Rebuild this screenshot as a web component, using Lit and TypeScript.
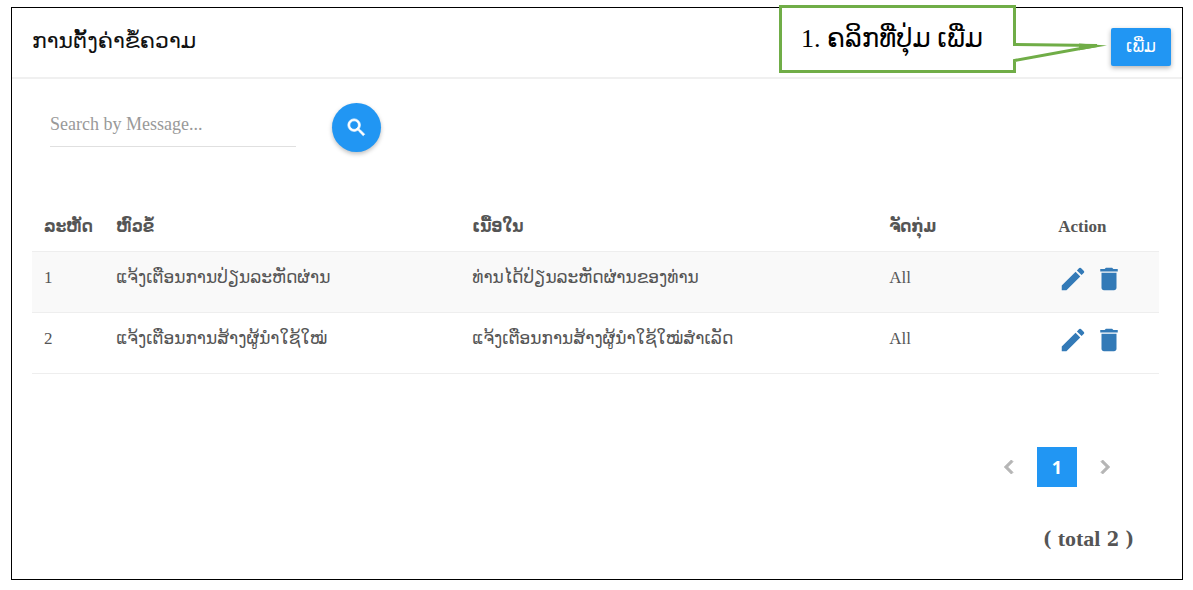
import { LitElement, html, css, svg } from "lit";
import { customElement, state } from "lit/decorators.js";

interface Message {
  id: number;
  title: string;
  body: string;
  group: string;
}

const icon = (path: string, variant = "") => html`
  <svg class="icon ${variant}" viewBox="0 0 24 24" aria-hidden="true">${svg`<path d=${path}></path>`}</svg>
`;

const SEARCH =
  "M15.5 14h-.79l-.28-.27A6.47 6.47 0 0 0 16 9.5 6.5 6.5 0 1 0 9.5 16c1.61 0 3.09-.59 4.23-1.57l.27.28v.79l5 4.99L20.49 19l-4.99-5zm-6 0C7.01 14 5 11.99 5 9.5S7.01 5 9.5 5 14 7.01 14 9.5 11.99 14 9.5 14z";
const EDIT =
  "M3 17.25V21h3.75L17.81 9.94l-3.75-3.75L3 17.25zM20.71 7.04a1 1 0 0 0 0-1.41l-2.34-2.34a1 1 0 0 0-1.41 0l-1.83 1.83 3.75 3.75 1.83-1.83z";
const TRASH = "M6 19c0 1.1.9 2 2 2h8c1.1 0 2-.9 2-2V7H6v12zM19 4h-3.500l-1-1h-5l-1 1H5v2h14V4z";
const LEFT = "M15.41 7.41 14 6l-6 6 6 6 1.41-1.41L10.83 12z";
const RIGHT = "M10 6 8.59 7.41 13.17 12l-4.58 4.59L10 18l6-6z";

@customElement("app-root")
export class AppRoot extends LitElement {
  @state() private messages: Message[] = [
    { id: 1, title: "ແຈ້ງເຕືອນການປ່ຽນລະຫັດຜ່ານ", body: "ທ່ານໄດ້ປ່ຽນລະຫັດຜ່ານຂອງທ່ານ", group: "All" },
    { id: 2, title: "ແຈ້ງເຕືອນການສ້າງຜູ້ນຳໃຊ້ໃໝ່", body: "ແຈ້ງເຕືອນການສ້າງຜູ້ນຳໃຊ້ໃໝ່ສຳເລັດ", group: "All" },
  ];

  static styles = css`
    :host {
      display: block;
      box-sizing: border-box;
      min-height: 100vh;
      padding: 7px 10px 10px 11px;
      background: #fff;
      color: #555;
      font-family: "Liberation Serif", "DejaVu Sans", serif;
      font-size: 17px;
      line-height: 28px;
    }
    * {
      box-sizing: border-box;
    }
    button,
    input {
      font: inherit;
      border: 0;
      margin: 0;
      padding: 0;
      background: none;
    }
    button {
      cursor: pointer;
    }
    .icon {
      display: block;
      width: 100%;
      height: 100%;
      fill: currentColor;
    }
    .heavy {
      stroke: currentColor;
      stroke-width: 0.8;
    }
    .panel {
      display: flex;
      flex-direction: column;
      min-height: calc(100vh - 17px);
      border: 1px solid #000;
    }
    .header {
      position: relative;
      display: flex;
      align-items: flex-start;
      justify-content: space-between;
      padding: 20px 11px 11px 20px;
      border-bottom: 2px solid #f0f0f0;
    }
    .title {
      margin: 0;
      color: #111;
      font-size: 22px;
      font-weight: 400;
      line-height: 26px;
    }
    .add {
      width: 60px;
      height: 38px;
      border-radius: 2px;
      background: #2196f3;
      color: #fff;
      box-shadow: 0 2px 5px rgba(0, 0, 0, 0.3);
    }
    .callout {
      position: absolute;
      top: -3px;
      right: 75px;
      width: 328px;
      height: 68px;
    }
    .bubble {
      position: absolute;
      inset: 0;
      width: 100%;
      height: 100%;
    }
    .outline {
      fill: #fff;
      stroke: #70ad47;
      stroke-width: 3;
    }
    .step {
      position: relative;
      margin: 0;
      padding: 18px 22px;
      color: #000;
      font-size: 26px;
      line-height: 32px;
      white-space: nowrap;
    }
    .search {
      display: flex;
      align-items: flex-start;
      gap: 36px;
      padding: 24px 38px 0;
    }
    .query {
      width: 246px;
      height: 44px;
      border-bottom: 1px solid #e0e0e0;
      color: #555;
      font-size: 18px;
      outline: none;
    }
    .query::placeholder {
      color: #999;
      opacity: 1;
    }
    .go {
      width: 49px;
      height: 49px;
      padding: 13px;
      border-radius: 50%;
      background: #2196f3;
      color: #fff;
      box-shadow: 0 2px 4px rgba(0, 0, 0, 0.25);
    }
    .list {
      padding: 50px 23px 0 20px;
    }
    .table {
      width: 100%;
      border-collapse: collapse;
      table-layout: fixed;
    }
    .c-id {
      width: 6.4%;
    }
    .c-title {
      width: 31.6%;
    }
    .c-body {
      width: 37%;
    }
    .c-group {
      width: 15%;
    }
    .table th {
      height: 49px;
      padding: 2px 12px 0;
      text-align: left;
      font-family: "Liberation Serif", "DejaVu Sans Condensed", "DejaVu Sans", serif;
      font-weight: 700;
      white-space: nowrap;
    }
    .table td {
      height: 61px;
      padding: 12px 12px 18px;
      border-top: 1px solid #eee;
      border-bottom: 1px solid #eee;
      vertical-align: top;
      white-space: nowrap;
    }
    .table tbody tr:nth-child(odd) {
      background: #f9f9f9;
    }
    .actions {
      display: flex;
      gap: 6px;
    }
    .action {
      flex: none;
      width: 30px;
      height: 30px;
      color: #337ab7;
    }
    .footer {
      display: flex;
      flex-direction: column;
      align-items: flex-end;
      gap: 38px;
      padding: 73px 48px 24px;
    }
    .pager {
      display: flex;
      align-items: center;
      gap: 14px;
      padding-right: 15px;
    }
    .step-page {
      width: 28px;
      height: 28px;
      color: #b5b5b5;
    }
    .page {
      width: 40px;
      height: 40px;
      background: #2196f3;
      color: #fff;
      font-family: "Open Sans", sans-serif;
      font-size: 18px;
      font-weight: 700;
    }
    .total {
      margin: 0;
      font-family: "DejaVu Serif Condensed", "DejaVu Serif", serif;
      font-size: 20px;
      font-weight: 700;
      line-height: 28px;
    }
    .word {
      font-family: "Liberation Serif", serif;
      font-size: 22px;
    }
  `;

  render() {
    return html`
      <main class="panel">
        <header class="header">
          <h1 class="title">ການຕັ້ງຄ່າຂໍ້ຄວາມ</h1>
          <button class="add" type="button">ເພີ່ມ</button>
          <div class="callout">
            <svg class="bubble" viewBox="0 0 328 68" aria-hidden="true">
              <path class="outline" d="M1.5 1.5H235.5V39.5L318 40.5L235.5 55.5V66.5H1.5Z"></path>
              <path d="M300 38.6L328 40.4L300 45.200Z" fill="#70ad47"></path>
            </svg>
            <p class="step">1. ຄລິກທີ່ປຸ່ມ ເພີ່ມ</p>
          </div>
        </header>
        <form class="search" @submit=${(e: Event) => e.preventDefault()}>
          <input class="query" type="text" aria-label="Search by Message" placeholder="Search by Message..." />
          <button class="go" type="submit" aria-label="Search">${icon(SEARCH, "heavy")}</button>
        </form>
        <section class="list">
          <table class="table">
            <colgroup>
              <col class="c-id" />
              <col class="c-title" />
              <col class="c-body" />
              <col class="c-group" />
              <col />
            </colgroup>
            <thead>
              <tr>
                <th scope="col">ລະຫັດ</th>
                <th scope="col">ຫົວຂໍ້</th>
                <th scope="col">ເນື້ອໃນ</th>
                <th scope="col">ຈັດກຸ່ມ</th>
                <th scope="col">Action</th>
              </tr>
            </thead>
            <tbody>
              ${this.messages.map(
                (m) => html`
                  <tr>
                    <td>${m.id}</td>
                    <td>${m.title}</td>
                    <td>${m.body}</td>
                    <td>${m.group}</td>
                    <td>
                      <div class="actions">
                        <button class="action" type="button" aria-label="Edit">${icon(EDIT)}</button>
                        <button class="action" type="button" aria-label="Delete">${icon(TRASH)}</button>
                      </div>
                    </td>
                  </tr>
                `
              )}
            </tbody>
          </table>
        </section>
        <footer class="footer">
          <nav class="pager" aria-label="Pages">
            <button class="step-page" type="button" aria-label="Previous">${icon(LEFT, "heavy")}</button>
            <button class="page" type="button" aria-current="page">1</button>
            <button class="step-page" type="button" aria-label="Next">${icon(RIGHT, "heavy")}</button>
          </nav>
          <p class="total">( <span class="word">total</span> ${this.messages.length} )</p>
        </footer>
      </main>
    `;
  }
}
